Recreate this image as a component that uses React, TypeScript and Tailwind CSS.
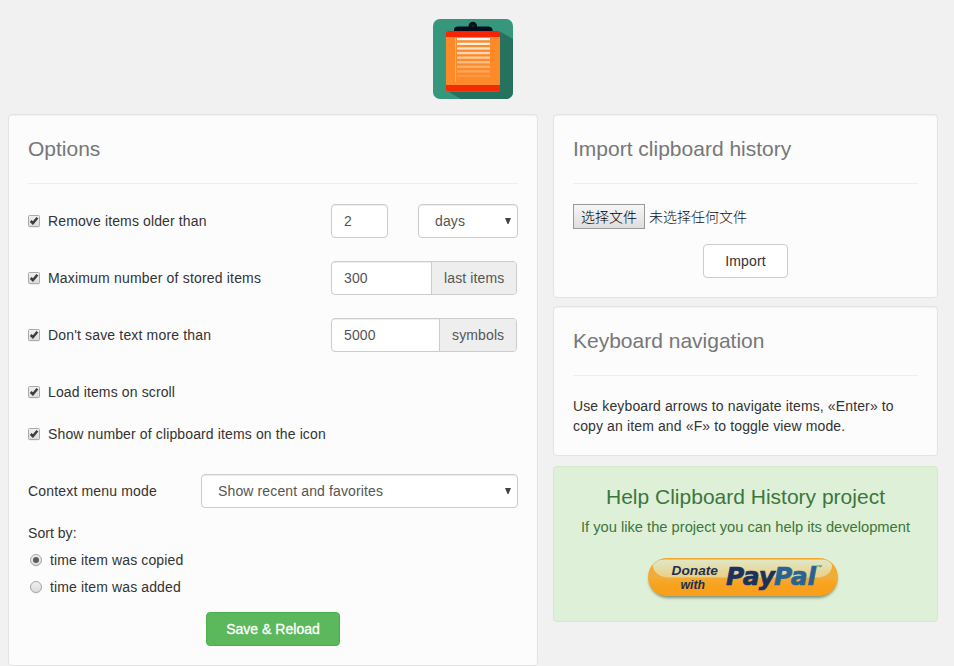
import type { ReactNode } from 'react';

function Checkbox() {
  return (
    <svg className="mr-2 block h-3 w-3 shrink-0 overflow-visible" viewBox="0 0 12 12" aria-hidden="true">
      <defs>
        <linearGradient id="box" x1="0" y1="0" x2="0" y2="1">
          <stop offset="0" stopColor="#f0f0f0" />
          <stop offset="1" stopColor="#dcdcdc" />
        </linearGradient>
      </defs>
      <rect x="0.5" y="1.2" width="11" height="11" rx="1.5" fill="none" stroke="#000" strokeOpacity="0.08" />
      <rect x="0.5" y="0.5" width="11" height="11" rx="1" fill="url(#box)" stroke="#aaa" />
      <path d="M2.7 6L4.9 8.2L9.4 2.8" fill="none" stroke="#3c3c3c" strokeWidth="2.5" />
    </svg>
  );
}

function Radio({ checked }: { checked?: boolean }) {
  return (
    <svg className="mr-2 ml-0.5 block h-3 w-3 shrink-0 overflow-visible" viewBox="0 0 12 12" aria-hidden="true">
      <circle cx="6" cy="6.7" r="5.6" fill="none" stroke="#000" strokeOpacity="0.08" />
      <circle cx="6" cy="6" r="5.5" fill="url(#box)" stroke="#a6a6a6" />
      {checked && <circle cx="6" cy="6" r="3" fill="#5c5c5c" />}
    </svg>
  );
}

function Check({ className, children }: { className?: string; children: ReactNode }) {
  return (
    <label className="flex h-5 items-center">
      <Checkbox />
      <span className={className}>{children}</span>
    </label>
  );
}

function Panel({ title, className, children }: { title: string; className: string; children: ReactNode }) {
  return (
    <section
      className={`rounded border border-[#e3e3e3] bg-[#fcfcfc] px-[19px] shadow-[inset_0_1px_1px_rgba(0,0,0,0.05)] ${className}`}
    >
      <h2 className="flex h-[69px] items-center border-b border-[#eee] text-[21px] tracking-normal text-[#777]">
        {title}
      </h2>
      {children}
    </section>
  );
}

function Select({ className, children }: { className: string; children: ReactNode }) {
  return (
    <div
      className={`flex h-[34px] items-center justify-between rounded border border-[#ccc] bg-white pr-[6px] pl-4 text-[#555] shadow-[inset_0_1px_1px_rgba(0,0,0,0.075)] ${className}`}
    >
      <span>{children}</span>
      <svg className="h-[6px] w-[6px]" viewBox="0 0 6 6" aria-hidden="true">
        <path d="M0 0H6L3.5 6H2.5Z" fill="#444" />
      </svg>
    </div>
  );
}

function Field({ value, unit, unitClass }: { value: string; unit: string; unitClass: string }) {
  return (
    <div className="mr-px flex h-[34px] w-[186px] overflow-hidden rounded border border-[#ccc] bg-white text-[#555]">
      <div className="flex flex-1 items-center pl-3 shadow-[inset_0_1px_1px_rgba(0,0,0,0.075)]">{value}</div>
      <div className={`flex items-center border-l border-[#ccc] bg-[#eee] pl-3 ${unitClass}`}>{unit}</div>
    </div>
  );
}

function Logo() {
  return (
    <svg className="block h-20 w-20" viewBox="0 0 80 80" aria-hidden="true">
      <defs>
        <clipPath id="tile">
          <rect width="80" height="80" rx="7" />
        </clipPath>
        <linearGradient id="lines" x1="0" y1="19" x2="0" y2="63" gradientUnits="userSpaceOnUse">
          <stop offset="0" stopColor="#fff" />
          <stop offset="1" stopColor="#fff" stopOpacity="0" />
        </linearGradient>
      </defs>
      <g clipPath="url(#tile)">
        <rect width="80" height="80" fill="#37977d" />
        <path d="M66 12L80 20V80H28L14 72Z" fill="#26725f" />
        <path d="M21 13V11Q21 7.500 25 7.500H35.500V7A4.300 4.300 0 0 1 44.100 7V7.500H55Q59.500 7.500 59.500 11V13Z" fill="#020d1b" />
        <circle cx="40" cy="7" r="1" fill="#12342f" />
        <rect x="13" y="12" width="54" height="60.500" rx="2" fill="#fd8a28" />
        <path d="M13 18V14Q13 12 15 12H65Q67 12 67 14V18Z" fill="#f62400" />
        <path d="M13 66H67V70.500Q67 72.500 65 72.500H15Q13 72.500 13 70.500Z" fill="#f22c02" />
        <rect x="22" y="19" width="1" height="44" fill="#fff" opacity="0.35" />
        <g fill="url(#lines)">
          <rect x="24" y="19" width="33" height="2.200" />
          <rect x="24" y="23.700" width="33" height="2.300" />
          <rect x="24" y="28.300" width="33" height="2.300" />
          <rect x="24" y="32.900" width="33" height="2.300" />
          <rect x="24" y="37.500" width="33" height="2.300" />
          <rect x="24" y="42.100" width="33" height="2.300" />
          <rect x="24" y="46.700" width="33" height="2.300" />
          <rect x="24" y="51.300" width="33" height="2.300" />
          <rect x="24" y="55.900" width="33" height="2.300" />
        </g>
      </g>
    </svg>
  );
}

function DonateButton() {
  return (
    <svg className="block h-[47px] w-[196px] tracking-normal" viewBox="0 0 196 47" aria-label="Donate with PayPal">
      <defs>
        <linearGradient id="gold" x1="0" y1="0" x2="0" y2="1">
          <stop offset="0" stopColor="#f5a623" />
          <stop offset="0.5" stopColor="#f2ad3a" />
          <stop offset="0.72" stopColor="#f9a11b" />
          <stop offset="1" stopColor="#f9a01b" />
        </linearGradient>
        <linearGradient id="gloss" x1="0" y1="0" x2="0" y2="1">
          <stop offset="0" stopColor="#dfe8c8" />
          <stop offset="1" stopColor="#eccf83" />
        </linearGradient>
        <filter id="shade" x="-5%" y="-10%" width="110%" height="140%">
          <feGaussianBlur stdDeviation="1.6" />
        </filter>
      </defs>
      <rect x="4" y="6" width="188" height="37" rx="18.500" fill="#50624a" opacity="0.65" filter="url(#shade)" />
      <rect x="3" y="3" width="190" height="38" rx="19" fill="url(#gold)" />
      <path d="M20 4.500H176C183 4.500 187 8 187 11C187 17 181 22.500 172 22.500H24C15 22.500 8 17 8 11C8 8 13 4.500 20 4.500Z" fill="url(#gloss)" />
      <g fontFamily="'Liberation Sans', Arial, sans-serif" fontStyle="italic" fontWeight="bold" fill="#1b2f52">
        <text x="26.500" y="20" fontSize="13" textLength="46.500" lengthAdjust="spacingAndGlyphs">Donate</text>
        <text x="35.500" y="33.500" fontSize="12.500" textLength="24.500" lengthAdjust="spacingAndGlyphs">with</text>
      </g>
      <g
        fontFamily="'DejaVu Sans', Verdana, sans-serif"
        fontStyle="italic"
        fontWeight="bold"
        fontSize="25"
        strokeWidth="0.7"
      >
        <text x="81" y="29.500" fill="#1b3160" stroke="#1b3160" textLength="49" lengthAdjust="spacingAndGlyphs">Pay</text>
        <text x="129" y="29.500" fill="#286394" stroke="#286394" textLength="42" lengthAdjust="spacingAndGlyphs">Pal</text>
      </g>
      <text x="171" y="13.500" fontFamily="'Liberation Sans', Arial, sans-serif" fontSize="6" fill="#4b6b78">™</text>
    </svg>
  );
}

export default function App() {
  return (
    <main className="h-[666px] w-full overflow-hidden bg-[#f1f1f1] pt-[19px] pr-4 pl-2 font-['Liberation_Sans',Arial,'Noto_Sans_CJK_SC',sans-serif] text-[14px] leading-5 tracking-[0.13px] text-[#333]">
      <header className="flex justify-center">
        <Logo />
      </header>
      <div className="mt-[15px] flex items-start gap-[15px]">
        <Panel title="Options" className="h-[552px] w-[530px]">
          <div className="mt-5 flex items-center justify-between">
            <Check>Remove items older than</Check>
            <div className="flex gap-[30px]">
              <div className="flex h-[34px] w-[57px] items-center rounded border border-[#ccc] bg-white pl-3 text-[#555] shadow-[inset_0_1px_1px_rgba(0,0,0,0.075)]">
                2
              </div>
              <Select className="w-[100px]">days</Select>
            </div>
          </div>
          <div className="mt-[23px] flex items-center justify-between">
            <Check className="tracking-[0.18px]">Maximum number of stored items</Check>
            <Field value="300" unit="last items" unitClass="w-[85px]" />
          </div>
          <div className="mt-[23px] flex items-center justify-between">
            <Check className="tracking-[0.16px]">Don't save text more than</Check>
            <Field value="5000" unit="symbols" unitClass="w-[77px]" />
          </div>
          <div className="mt-[30px] flex flex-col gap-[22px]">
            <Check>Load items on scroll</Check>
            <Check>Show number of clipboard items on the icon</Check>
          </div>
          <div className="mt-[30px] flex items-center justify-between">
            <span className="tracking-[0.17px]">Context menu mode</span>
            <Select className="w-[317px]">Show recent and favorites</Select>
          </div>
          <div className="mt-[15px] flex flex-col gap-[7px]">
            <p className="tracking-[0.04px]">Sort by:</p>
            <label className="flex items-center">
              <Radio checked />
              time item was copied
            </label>
            <label className="flex items-center">
              <Radio />
              time item was added
            </label>
          </div>
          <div className="mt-[15px] flex justify-center">
            <button className="h-[34px] w-[134px] rounded border border-[#4cae4c] bg-[#5cb85c] tracking-[0.02px] text-white [-webkit-text-stroke:0.3px_white]">
              Save &amp; Reload
            </button>
          </div>
        </Panel>
        <div className="w-[385px]">
          <Panel title="Import clipboard history" className="h-[184px]">
            <div className="mt-5 flex items-center gap-1 font-light tracking-normal text-[#111]">
              <button className="h-[25px] w-[72px] border border-[#999] bg-linear-to-b from-[#f6f6f6] to-[#dedede] text-black">
                选择文件
              </button>
              <span>未选择任何文件</span>
            </div>
            <div className="mt-[15px] flex justify-center">
              <button className="h-[34px] w-[85px] rounded border border-[#ccc] bg-white">Import</button>
            </div>
          </Panel>
          <Panel title="Keyboard navigation" className="mt-2 h-[150px]">
            <p className="mt-5">
              Use keyboard arrows to navigate items, «Enter» to
              <br />
              copy an item and «F» to toggle view mode.
            </p>
          </Panel>
          <section className="mt-[10px] flex h-[156px] flex-col items-center rounded border border-[#d6e9c6] bg-[#dff0d8] pt-[15px] text-[#3c763d]">
            <h2 className="text-[21px] leading-[30px] tracking-normal">Help Clipboard History project</h2>
            <p className="mt-[5px] text-[14.7px] tracking-normal">
              If you like the project you can help its development
            </p>
            <div className="mt-[18px] mr-[6px]">
              <DonateButton />
            </div>
          </section>
        </div>
      </div>
    </main>
  );
}
